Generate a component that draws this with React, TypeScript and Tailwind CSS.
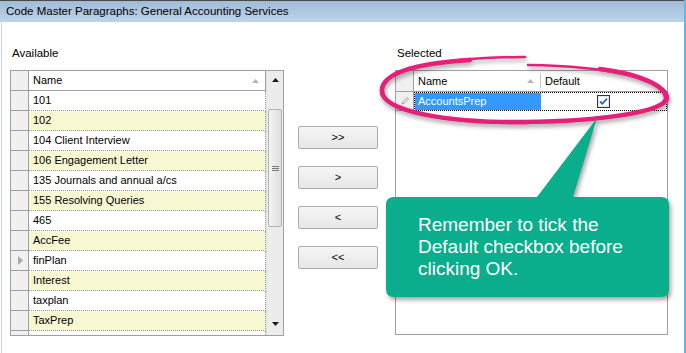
import React from "react";

const rows = [
  "101",
  "102",
  "104 Client Interview",
  "106 Engagement Letter",
  "135 Journals and annual a/cs",
  "155 Resolving Queries",
  "465",
  "AccFee",
  "finPlan",
  "Interest",
  "taxplan",
  "TaxPrep",
  "",
];

function SortArrow() {
  return (
    <svg width="7" height="4" viewBox="0 0 7 4" className="shrink-0">
      <polygon points="0,4 7,4 3.5,0" fill="#b5b5b5" />
    </svg>
  );
}

function LeftGrid() {
  return (
    <div className="w-[274px] h-[266px] border border-[#a0a0a0] flex overflow-hidden bg-white">
      <div className="w-[255px] flex flex-col">
        <div className="h-[20px] flex border-b border-[#a0a0a0] shrink-0">
          <div className="w-[18px] h-full border-r border-[#a0a0a0] bg-[#f0f0f0]" />
          <div className="w-[237px] h-full flex items-center pl-[4px] pr-[6px] bg-white border-r border-[#a0a0a0]">
            <span className="flex-1">Name</span>
            <SortArrow />
          </div>
        </div>
        {rows.map((r, i) => (
          <div key={i} className="h-[20px] flex shrink-0">
            <div className="w-[18px] h-full border-r border-b border-[#a0a0a0] bg-[#f0f0f0] flex items-center pl-[7px]">
              {r === "finPlan" && (
                <svg width="5" height="9" viewBox="0 0 5 9">
                  <polygon points="0,0 5,4.5 0,9" fill="#a8a8a8" />
                </svg>
              )}
            </div>
            <div
              className={
                "w-[237px] h-full flex items-center pl-[4px] border-r border-b border-dotted border-[#9a9a9a] " +
                (i % 2 === 1 ? "bg-[#f7f7d2]" : "bg-white")
              }
            >
              {r}
            </div>
          </div>
        ))}
      </div>
      <div className="w-[17px] flex flex-col bg-[#ececec] border-l border-[#e2e2e2]">
        <div className="h-[17px] flex items-center justify-center shrink-0">
          <svg width="7" height="4" viewBox="0 0 7 4">
            <polygon points="0,4 7,4 3.5,0" fill="#1a1a1a" />
          </svg>
        </div>
        <div className="mt-[21px] mx-[1px] h-[118px] rounded-[2px] border border-[#b3b3b3] bg-gradient-to-r from-[#f4f4f4] to-[#dedede] flex items-center justify-center shrink-0">
          <div className="flex flex-col gap-[1px]">
            <div className="w-[7px] h-[1px] bg-[#777]" />
            <div className="w-[7px] h-[1px] bg-[#777]" />
            <div className="w-[7px] h-[1px] bg-[#777]" />
          </div>
        </div>
        <div className="flex-1" />
        <div className="h-[17px] flex items-center justify-center shrink-0 mb-[3px]">
          <svg width="7" height="4" viewBox="0 0 7 4">
            <polygon points="0,0 7,0 3.5,4" fill="#1a1a1a" />
          </svg>
        </div>
      </div>
    </div>
  );
}

function RightGrid() {
  return (
    <div className="w-[273px] h-[265px] border border-[#a0a0a0] flex flex-col bg-white overflow-hidden">
      <div className="h-[21px] flex border-b border-[#a0a0a0] shrink-0">
        <div className="w-[18px] h-full border-r border-[#a0a0a0] bg-[#f0f0f0]" />
        <div className="w-[127px] h-full flex items-center pl-[4px] pr-[7px] relative">
          <span className="flex-1">Name</span>
          <SortArrow />
          <div className="absolute right-0 top-[2px] bottom-[3px] w-[1px] bg-[#c8c8c8]" />
        </div>
        <div className="flex-1 h-full flex items-center pl-[4px]">Default</div>
      </div>
      <div className="h-[19px] flex shrink-0">
        <div className="w-[18px] h-full border-r border-b border-[#a0a0a0] bg-[#f0f0f0] flex items-center justify-center">
          <svg width="8" height="8" viewBox="0 0 8 8">
            <path d="M1 7 L2 4.5 L6 0.5 L7.5 2 L3.5 6 Z" fill="none" stroke="#9a9a9a" strokeWidth="0.9" />
          </svg>
        </div>
        <div className="flex-1 h-full flex border border-dotted border-black">
          <div className="w-[126px] h-full bg-[#3399ff] text-white flex items-center pl-[3px]">AccountsPrep</div>
          <div className="flex-1 h-full flex items-center justify-center">
            <svg width="13" height="13" viewBox="0 0 13 13">
              <rect x="0.5" y="0.5" width="12" height="12" fill="#fff" stroke="#333" />
              <rect x="1.5" y="1.5" width="10" height="10" fill="none" stroke="#dfe7ef" />
              <path d="M3 6.5 L5.3 8.8 L10 3.6" fill="none" stroke="#2a63b8" strokeWidth="1.8" />
            </svg>
          </div>
        </div>
      </div>
    </div>
  );
}

function Btn({ label }: { label: string }) {
  return (
    <div className="h-[23px] w-[80px] border border-[#acacac] rounded-[2px] bg-gradient-to-b from-[#f6f6f6] to-[#e6e6e6] flex items-center justify-center text-[11px] text-black">
      {label}
    </div>
  );
}

export default function App() {
  return (
    <div
      className="relative w-[686px] h-[353px] overflow-hidden bg-white flex text-black"
      style={{ fontFamily: '"Liberation Sans", Arial, sans-serif' }}
    >
      <div className="w-[684px] h-full flex flex-col">
        <div className="h-[22px] shrink-0 border-t border-[#4a4a4a] bg-gradient-to-b from-[#a2bbd7] to-[#bcd3ea] flex items-center pl-[6px] text-[11.5px]">
          Code Master Paragraphs: General Accounting Services
        </div>
        <div className="flex-1 flex text-[11px]">
          <div className="w-[1px]" />
          <div className="w-[1px] bg-[#c3d7ec]" />
          <div className="w-[8px]" />
          <div className="flex flex-col pt-[24px]">
            <div className="pl-[2px] h-[14px] leading-[14px] text-[11.5px] mb-[10px]">Available</div>
            <LeftGrid />
          </div>
          <div className="ml-[14px] pt-[104px] flex flex-col gap-[17px]">
            <Btn label=">>" />
            <Btn label=">" />
            <Btn label="<" />
            <Btn label="<<" />
          </div>
          <div className="ml-[17px] flex flex-col pt-[24px]">
            <div className="pl-[2px] h-[14px] leading-[14px] text-[11.5px] mb-[10px]">Selected</div>
            <RightGrid />
          </div>
        </div>
      </div>
      <div className="w-[2px] h-full bg-[#4fc1ee]" />

      {/* magenta ellipse annotation */}
      <svg
        className="absolute left-0 top-0 pointer-events-none"
        width="686"
        height="353"
        viewBox="0 0 686 353"
        style={{ filter: "drop-shadow(1px 3px 2px rgba(0,0,0,0.35))" }}
      >
        <path
          d="M 525 57 C 450 57, 382 68, 381 90 C 380 112, 450 124, 525 123 C 600 122, 668 112, 668 98 C 668 80, 610 66, 528 65"
          fill="none"
          stroke="#e6207a"
          strokeWidth="2.5"
          strokeLinecap="round"
        />
        <path
          d="M 470 60 C 420 63, 383 72, 382 90 C 381 112, 450 123, 525 122 C 600 121, 666 112, 666 98 C 666 86, 640 74, 600 69"
          fill="none"
          stroke="#e6207a"
          strokeWidth="4.5"
          strokeLinecap="round"
        />
      </svg>

      {/* callout pointer */}
      <svg
        className="absolute left-0 top-0 pointer-events-none"
        width="686"
        height="353"
        viewBox="0 0 686 353"
        style={{ filter: "drop-shadow(2px 3px 2px rgba(0,0,0,0.35))" }}
      >
        <path
          d="M 394 197 L 537 197 L 597 118 L 573 197 L 661 197 Q 669 197 669 205 L 669 289 Q 669 297 661 297 L 394 297 Q 386 297 386 289 L 386 205 Q 386 197 394 197 Z"
          fill="#0aae8d"
        />
      </svg>
      <div className="absolute left-[386px] top-[197px] w-[283px] h-[100px] pl-[32px] pt-[17px] text-white text-[19px] leading-[22px]">
        Remember to tick the
        <br />
        Default checkbox before
        <br />
        clicking OK.
      </div>
    </div>
  );
}
